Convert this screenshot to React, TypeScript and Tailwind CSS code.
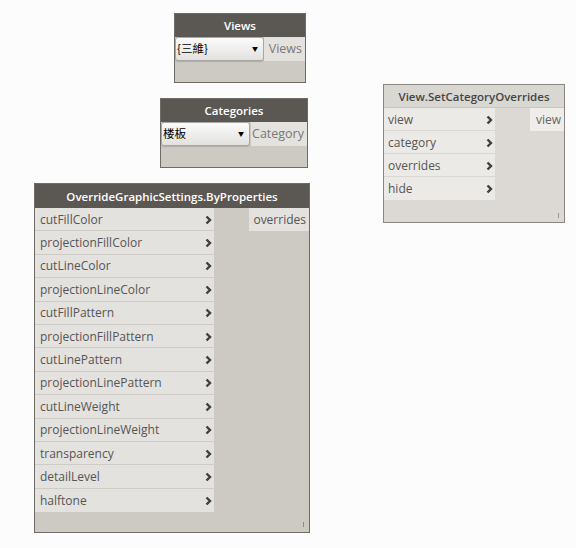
import React from "react";

const font = { fontFamily: '"Open Sans", "Noto Sans CJK TC", sans-serif' };

function Chevron() {
  return (
    <svg width="7" height="10" viewBox="0 0 7 10" className="shrink-0">
      <polyline points="1.5,1.5 5,5 1.5,8.5" fill="none" stroke="#3f3f3f" strokeWidth="2.4" />
    </svg>
  );
}

function Dropdown({ text }: { text: string }) {
  return (
    <div className="h-full w-[89px] rounded-[3px] border border-[#a9a7a3] bg-gradient-to-b from-[#fbfbfb] to-[#e2e1df] flex items-center justify-between pl-[1px] pr-[5px] text-[11.5px] text-black shadow-[0_1px_1px_rgba(0,0,0,0.15)]">
      <span style={{ fontFamily: '"Noto Sans CJK TC", sans-serif' }}>{text}</span>
      <span className="text-[6px] leading-none">▼</span>
    </div>
  );
}

function SelectNode({ left, top, width, title, value, out, outW }: { left: number; top: number; width: number; title: string; value: string; out: string; outW: number }) {
  return (
    <div className="absolute border border-[#6f6c68] bg-[#cdcac4] flex flex-col" style={{ left, top, width, height: 70, ...font }}>
      <div className="h-[23px] bg-[#5b5854] text-white font-semibold text-[11.5px] flex items-center justify-center pt-[1px]">{title}</div>
      <div className="h-[24px] flex justify-between items-stretch">
        <Dropdown text={value} />
        <div className="bg-[#e4e2de] flex items-center justify-end pr-[3px] text-[12.5px] text-[#7a7875]" style={{ width: outW }}>{out}</div>
      </div>
    </div>
  );
}

export default function App() {
  const ogsInputs = [
    "cutFillColor",
    "projectionFillColor",
    "cutLineColor",
    "projectionLineColor",
    "cutFillPattern",
    "projectionFillPattern",
    "cutLinePattern",
    "projectionLinePattern",
    "cutLineWeight",
    "projectionLineWeight",
    "transparency",
    "detailLevel",
    "halftone",
  ];
  const scoInputs = ["view", "category", "overrides", "hide"];
  return (
    <div className="relative w-[576px] h-[548px] bg-[#fcfcfc] overflow-hidden" style={font}>
      <SelectNode left={174} top={13} width={132} title="Views" value="{三維}" out="Views" outW={41} />
      <SelectNode left={160} top={98} width={148} title="Categories" value="楼板" out="Category" outW={56} />

      {/* View.SetCategoryOverrides */}
      <div className="absolute border border-[#8a8783] bg-[#dcd9d4] flex flex-col" style={{ left: 383, top: 84, width: 182, height: 139 }}>
        <div className="h-[23px] bg-[#d9d7d2] border-b border-[#c9c6c1] text-[#454545] font-semibold text-[11.5px] flex items-center justify-center pt-[1px]">View.SetCategoryOverrides</div>
        <div className="flex justify-between">
          <div className="w-[111px] flex flex-col">
            {scoInputs.map((n, i) => (
              <div key={n} className={"h-[23px] bg-[#eceae6] flex items-center justify-between pl-[4px] pr-[2px] pt-[1px] text-[12px] text-[#555] " + (i < scoInputs.length - 1 ? "border-b border-[#dad7d2]" : "")}>
                <span>{n}</span>
                <Chevron />
              </div>
            ))}
          </div>
          <div className="w-[34px] h-[23px] bg-[#eeedea] flex items-center justify-end pr-[3px] pt-[1px] text-[12px] text-[#666]">view</div>
        </div>
        <div className="flex-1 relative">
          <div className="absolute right-[5px] bottom-[4px] w-px h-[5px] bg-[#9a9793]" />
        </div>
      </div>

      {/* OverrideGraphicSettings.ByProperties */}
      <div className="absolute border border-[#6f6c68] bg-[#cdcac4] flex flex-col" style={{ left: 34, top: 183, width: 276, height: 350 }}>
        <div className="h-[24px] bg-[#5b5854] text-white font-semibold text-[11.5px] flex items-center justify-center pt-[1px]">OverrideGraphicSettings.ByProperties</div>
        <div className="flex justify-between">
          <div className="w-[179px] flex flex-col">
            {ogsInputs.map((n, i) => (
              <div key={n} className={"h-[23.4px] bg-[#e4e2de] flex items-center justify-between pl-[5px] pr-[2px] pt-[1px] text-[12px] text-[#555] " + (i < ogsInputs.length - 1 ? "border-b border-[#cfccc7]" : "")}>
                <span>{n}</span>
                <Chevron />
              </div>
            ))}
          </div>
          <div className="w-[60px] h-[23px] bg-[#e4e2de] flex items-center justify-end pr-[3px] pt-[1px] text-[12px] text-[#555]">overrides</div>
        </div>
        <div className="flex-1 relative">
          <div className="absolute right-[5px] bottom-[5px] w-px h-[5px] bg-[#8d8a86]" />
        </div>
      </div>
    </div>
  );
}
